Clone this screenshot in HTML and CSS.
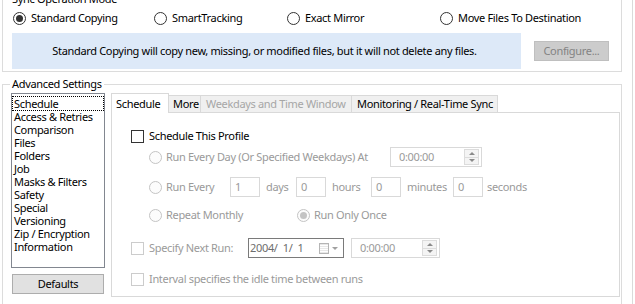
FILE: index.html
```html
<!DOCTYPE html>
<html>
<head>
<meta charset="utf-8">
<link rel="stylesheet" href="styles.css">
</head>
<body>
<div class="window">
  <fieldset class="group group-mode">
    <legend>Sync Operation Mode</legend>
    <div class="mode-row">
      <label class="opt"><span class="radio on"></span>Standard Copying</label>
      <label class="opt"><span class="radio"></span>SmartTracking</label>
      <label class="opt"><span class="radio"></span>Exact Mirror</label>
      <label class="opt"><span class="radio"></span>Move Files To Destination</label>
    </div>
    <div class="mode-info">
      <div class="info-bar">Standard Copying will copy new, missing, or modified files, but it will not delete any files.</div>
      <button class="btn btn-off btn-configure">Configure...</button>
    </div>
  </fieldset>

  <fieldset class="group group-adv">
    <legend>Advanced Settings</legend>
    <div class="adv">
      <div class="side">
        <ul class="listbox">
          <li class="focus">Schedule</li>
          <li>Access &amp; Retries</li>
          <li>Comparison</li>
          <li>Files</li>
          <li>Folders</li>
          <li>Job</li>
          <li>Masks &amp; Filters</li>
          <li>Safety</li>
          <li>Special</li>
          <li>Versioning</li>
          <li>Zip / Encryption</li>
          <li>Information</li>
        </ul>
        <button class="btn btn-defaults">Defaults</button>
      </div>

      <div class="tabs">
        <div class="tab-strip">
          <div class="tab tab-active tab-w1">Schedule</div>
          <div class="tab tab-w2">More</div>
          <div class="tab tab-off tab-w3">Weekdays and Time Window</div>
          <div class="tab tab-w4">Monitoring / Real-Time Sync</div>
        </div>
        <div class="tab-panel">
          <div class="row r1 ind0">
            <span class="check"></span><span>Schedule This Profile</span>
          </div>
          <div class="row r2 ind1 dis">
            <span class="lbl lw-day"><span class="radio off"></span>Run Every Day (Or Specified Weekdays) At</span>
            <span class="field time-field"><span class="val">0:00:00</span><span class="spin"><i class="up"></i><i class="dn"></i></span></span>
          </div>
          <div class="row r3 ind1 dis">
            <span class="lbl lw-every"><span class="radio off"></span>Run Every</span>
            <span class="field num">1</span><span class="unit u-days">days</span>
            <span class="field num">0</span><span class="unit u-hours">hours</span>
            <span class="field num">0</span><span class="unit u-min">minutes</span>
            <span class="field num">0</span><span class="unit u-sec">seconds</span>
          </div>
          <div class="row r4 ind1 dis">
            <span class="lbl lw-month"><span class="radio off"></span>Repeat Monthly</span>
            <span class="lbl"><span class="radio off on-off"></span>Run Only Once</span>
          </div>
          <div class="row r5 ind0 dis">
            <span class="lbl lw-next"><span class="check off"></span>Specify Next Run:</span>
            <span class="field date-field"><span class="val">2004/&nbsp; 1/&nbsp; 1</span><span class="cal"></span><span class="drop"></span></span>
            <span class="field time-field t2"><span class="val">0:00:00</span><span class="spin"><i class="up"></i><i class="dn"></i></span></span>
          </div>
          <div class="row r6 ind0 dis">
            <span class="check off"></span><span>Interval specifies the idle time between runs</span>
          </div>
        </div>
      </div>
    </div>
  </fieldset>
</div>
</body>
</html>
```

FILE: styles.css
```css
* { box-sizing: border-box; }
html, body { margin: 0; padding: 0; background: #fff; }
body {
  font-family: "Noto Sans", "Open Sans", sans-serif;
  font-size: 11px;
  letter-spacing: -0.33px;
  line-height: 14px;
  color: #000;
  white-space: nowrap;
}
.window {
  width: 633px;
  height: 304px;
  border-right: 1px solid #dadada;
  overflow: hidden;
}
.group {
  margin: 0 10px 0 2px;
  border: 1px solid #dcdcdc;
  padding: 0;
  min-width: 0;
}
.group legend {
  padding: 0 2px;
  line-height: 14px;
}
.group-mode {
  margin-top: -8px;
  padding: 5px 0 2px 9px;
}
.group-mode legend { margin-left: -2px; }
.mode-row {
  display: grid;
  grid-template-columns: 141px 133px 153px auto;
  height: 14px;
}
.opt {
  display: flex;
  align-items: center;
  gap: 5px;
  padding-left: 1px;
}
.radio {
  display: inline-block;
  width: 13px;
  height: 13px;
  border: 1px solid #333;
  border-radius: 50%;
  background: #fff;
  position: relative;
  flex: none;
}
.radio.on::after {
  content: "";
  position: absolute;
  left: 2px; top: 2px;
  width: 7px; height: 7px;
  border-radius: 50%;
  background: #333;
}
.radio.off { border-color: #c4c4c4; background: #fcfcfc; }
.radio.on-off::after {
  content: "";
  position: absolute;
  left: 2px; top: 2px;
  width: 7px; height: 7px;
  border-radius: 50%;
  background: #c4c4c4;
}
.mode-info {
  display: flex;
  align-items: center;
  margin-top: 8px;
}
.info-bar {
  width: 509px;
  height: 36px;
  background: #dde9f8;
  display: flex;
  align-items: center;
  justify-content: center;
  padding-right: 4px;
}
.btn {
  font: inherit;
  letter-spacing: inherit;
  border: 1px solid #adadad;
  background: #e1e1e1;
  color: #000;
  padding: 0;
  height: 20px;
}
.btn-off {
  background: #cccccc;
  border-color: #bfbfbf;
  color: #838383;
}
.btn-configure {
  margin-left: 13px;
  width: 75px;
}
.group-adv {
  margin-top: 5px;
  height: 230px;
  padding: 2px 2px 2px 8px;
}
.group-adv legend { margin-left: -1px; }
.adv {
  display: grid;
  grid-template-columns: 94px 509px;
  column-gap: 6px;
}
.side { display: flex; flex-direction: column; }
.listbox {
  list-style: none;
  margin: 0;
  padding: 3px 1px 0 1px;
  height: 175px;
  border: 1px solid #828790;
  line-height: 13px;
}
.listbox li { padding-left: 1px; height: 13px; line-height: 13px; }
.listbox li.focus { outline: 1px dotted #000; outline-offset: 0; }
.btn-defaults {
  margin: 6px 0 0 1px;
  width: 92px;
}
.tab-strip {
  display: flex;
  align-items: flex-end;
  height: 19px;
  position: relative;
  z-index: 1;
}
.tab {
  height: 17px;
  border: 1px solid #d9d9d9;
  border-bottom: none;
  border-left: none;
  background: #f0f0f0;
  padding-left: 4px;
  line-height: 16px;
  overflow: hidden;
}
.tab-active {
  height: 20px;
  background: #fff;
  border-left: 1px solid #d9d9d9;
  margin-bottom: -1px;
  line-height: 19px;
  padding-left: 4px;
}
.tab-off { color: #a6a6a6; }
.tab-w1 { width: 58px; }
.tab-w2 { width: 32px; }
.tab-w3 { width: 151px; padding-left: 5px; }
.tab-w4 { width: 146px; padding-left: 5px; }
.tab-panel {
  height: 185px;
  border: 1px solid #d9d9d9;
  padding: 13px 0 0 19px;
  background: #fff;
}
.row {
  display: flex;
  align-items: center;
  height: 20px;
}
.ind1 { padding-left: 18px; }
.r2 { margin-top: 1px; }
.r3 { margin-top: 10px; }
.r4 { margin-top: 8px; }
.r5 { margin-top: 13px; }
.r6 { margin-top: 11px; }
.dis { color: #9a9a9a; }
.check {
  display: inline-block;
  width: 13px;
  height: 13px;
  border: 1px solid #333;
  background: #fff;
  margin-right: 5px;
  flex: none;
}
.check.off { border-color: #cccccc; }
.lbl {
  display: flex;
  align-items: center;
  flex: none;
}
.lbl .radio { margin-right: 4px; }
.lw-day { width: 241px; }
.lw-every { width: 81px; }
.lw-month { width: 148px; }
.lw-next { width: 117px; }
.field {
  display: flex;
  align-items: center;
  height: 20px;
  border: 1px solid #d9d9d9;
  background: #fff;
  flex: none;
}
.num { width: 30px; padding-left: 4px; }
.unit { flex: none; padding-left: 6px; }
.u-days { width: 36px; }
.u-hours { width: 45px; }
.u-min { width: 52px; }
.u-sec { width: 60px; padding-left: 4px; }
.time-field {
  width: 92px;
  padding-left: 8px;
  justify-content: space-between;
  padding-right: 2px;
}
.t2 { width: 89px; margin-left: 7px; }
.spin {
  display: flex;
  flex-direction: column;
  width: 15px;
  height: 16px;
  border: 1px solid #dcdcdc;
  background: #f4f4f4;
}
.spin i {
  flex: 1;
  display: flex;
  align-items: center;
  justify-content: center;
}
.spin i.up { border-bottom: 1px solid #dcdcdc; }
.spin i::after {
  content: "";
  border-left: 3px solid transparent;
  border-right: 3px solid transparent;
}
.spin i.up::after { border-bottom: 3px solid #8a8a8a; }
.spin i.dn::after { border-top: 3px solid #8a8a8a; }
.date-field {
  width: 96px;
  border-color: #7a7a7a;
  padding-left: 1px;
  color: #6d6d6d;
}
.date-field .val { width: 69px; }
.cal {
  width: 10px;
  height: 11px;
  border: 1px solid #b5b5b5;
  background: repeating-linear-gradient(#e8e8e8 0 1px, #fff 1px 2px);
}
.drop {
  margin-left: 3px;
  border-left: 3px solid transparent;
  border-right: 3px solid transparent;
  border-top: 3px solid #a0a0a0;
}
```
